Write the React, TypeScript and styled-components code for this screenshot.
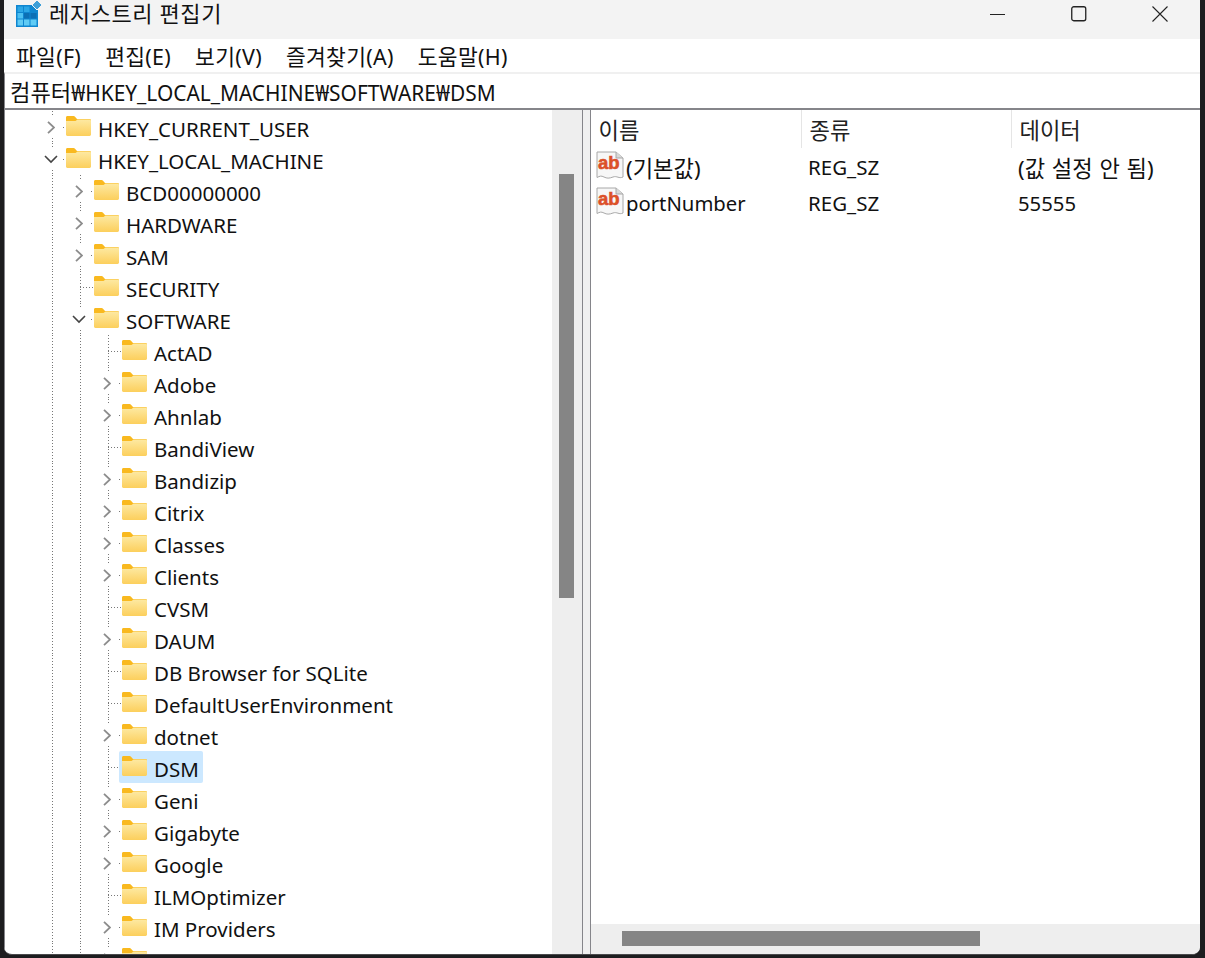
import styled, { createGlobalStyle } from "styled-components";

const FONT = `"Noto Sans", "Noto Sans CJK KR", sans-serif`;

type TreeItem = {
  label: string;
  level: number;
  state?: "open" | "closed";
  selected?: boolean;
};

const TREE: TreeItem[] = [
  { label: "HKEY_CURRENT_USER", level: 0, state: "closed" },
  { label: "HKEY_LOCAL_MACHINE", level: 0, state: "open" },
  { label: "BCD00000000", level: 1, state: "closed" },
  { label: "HARDWARE", level: 1, state: "closed" },
  { label: "SAM", level: 1, state: "closed" },
  { label: "SECURITY", level: 1 },
  { label: "SOFTWARE", level: 1, state: "open" },
  { label: "ActAD", level: 2 },
  { label: "Adobe", level: 2, state: "closed" },
  { label: "Ahnlab", level: 2, state: "closed" },
  { label: "BandiView", level: 2 },
  { label: "Bandizip", level: 2, state: "closed" },
  { label: "Citrix", level: 2, state: "closed" },
  { label: "Classes", level: 2, state: "closed" },
  { label: "Clients", level: 2, state: "closed" },
  { label: "CVSM", level: 2 },
  { label: "DAUM", level: 2, state: "closed" },
  { label: "DB Browser for SQLite", level: 2 },
  { label: "DefaultUserEnvironment", level: 2 },
  { label: "dotnet", level: 2, state: "closed" },
  { label: "DSM", level: 2, selected: true },
  { label: "Geni", level: 2, state: "closed" },
  { label: "Gigabyte", level: 2, state: "closed" },
  { label: "Google", level: 2, state: "closed" },
  { label: "ILMOptimizer", level: 2 },
  { label: "IM Providers", level: 2, state: "closed" },
  { label: "Logi", level: 2, state: "closed" },
];

const MENUS = ["파일(F)", "편집(E)", "보기(V)", "즐겨찾기(A)", "도움말(H)"];

const VALUES = [
  { name: "(기본값)", type: "REG_SZ", data: "(값 설정 안 됨)", hangul: true },
  { name: "portNumber", type: "REG_SZ", data: "55555", hangul: false },
];

const RegistryIcon = () => (
  <svg width="26" height="27" viewBox="0 0 26 27">
    <rect x="0" y="5" width="22" height="22" fill="#0f86d0" />
    <g fill="#2ba6e6">
      <rect x="1.500" y="6.500" width="5.500" height="5.500" />
      <rect x="8" y="6.500" width="5.500" height="5.500" />
      <rect x="1.500" y="13" width="5.500" height="5.500" fill="#4cc0f2" />
      <rect x="8" y="13" width="5.500" height="5.500" fill="#0c6fb5" />
      <rect x="14.500" y="13" width="6" height="5.500" fill="#0c6fb5" />
      <rect x="1.500" y="19.500" width="5.500" height="6" fill="#5fcbf5" />
      <rect x="8" y="19.500" width="5.500" height="6" fill="#5fcbf5" />
      <rect x="14.500" y="19.500" width="6" height="6" fill="#5fcbf5" />
    </g>
    <path d="M21 0l5 5-5 5-5-5z" fill="#3d9fd8" stroke="#f3f3f3" strokeWidth="1" />
  </svg>
);

const FolderIcon = () => (
  <svg width="25" height="20" viewBox="0 0 25 20">
    <defs>
      <linearGradient id="folderBody" x1="0" y1="0" x2="0" y2="1">
        <stop offset="0" stopColor="#fde9a2" />
        <stop offset="1" stopColor="#fccf5c" />
      </linearGradient>
    </defs>
    <path d="M0 1.500C0 .7.6 0 1.400 0h6.200c.5 0 .9.2 1.200.5L11 3h12.600c.8 0 1.400.6 1.400 1.400V8H0z" fill="#f9b91f" />
    <path d="M0 5h9.500L11.500 3.600h12.100c.8 0 1.400.6 1.400 1.400v13.600c0 .8-.6 1.400-1.400 1.400H1.400C.6 20 0 19.400 0 18.600z" fill="url(#folderBody)" />
  </svg>
);

const StringIcon = () => (
  <svg width="29" height="29" viewBox="0 0 29 29">
    <path
      d="M1 1h19l7 6v19c-4 2-6-1.500-10 0s-6 1.500-9 0-4-1-7 .5z"
      fill="#f7f7f7"
      stroke="#a8a8a8"
      strokeWidth="1"
    />
    <path d="M20 1v6h7" fill="#d8d8d8" stroke="#a8a8a8" strokeWidth="1" />
    <text
      x="2"
      y="18"
      fontFamily="Liberation Sans, sans-serif"
      fontWeight="700"
      fontSize="18.5"
      fill="#dc5028"
      stroke="#dc5028"
      strokeWidth=".6"
    >
      ab
    </text>
  </svg>
);

const Chevron = ({ open }: { open: boolean }) =>
  open ? (
    <svg width="14" height="9" viewBox="0 0 14 9">
      <path d="M1 1l6 6 6-6" fill="none" stroke="#444444" strokeWidth="1.600" />
    </svg>
  ) : (
    <svg width="8" height="13" viewBox="0 0 8 13">
      <path d="M1 .8l6 5.700-6 5.700" fill="none" stroke="#8c8c8c" strokeWidth="1.800" />
    </svg>
  );

const App = () => (
  <Desktop>
    <GlobalStyle />
    <Window>
      <TitleBar>
        <TitleIconSlot>
          <RegistryIcon />
        </TitleIconSlot>
        <TitleText>레지스트리 편집기</TitleText>
        <WindowControls>
          <ControlButton>
            <svg width="16" height="16" viewBox="0 0 16 16">
              <path d="M0 8.500h15" stroke="#222" strokeWidth="1" />
            </svg>
          </ControlButton>
          <ControlButton>
            <svg width="16" height="16" viewBox="0 0 16 16">
              <rect x=".75" y=".75" width="14" height="14" rx="2" fill="none" stroke="#222" strokeWidth="1.300" />
            </svg>
          </ControlButton>
          <ControlButton>
            <svg width="16" height="16" viewBox="0 0 16 16">
              <path d="M.5.500l15 15M15.500.500l-15 15" stroke="#222" strokeWidth="1.100" />
            </svg>
          </ControlButton>
        </WindowControls>
      </TitleBar>

      <MenuBar>
        {MENUS.map((m) => (
          <MenuItem key={m}>{m}</MenuItem>
        ))}
      </MenuBar>

      <AddressBar>
        <Hangul>컴퓨터</Hangul>₩HKEY_LOCAL_MACHINE₩SOFTWARE₩DSM
      </AddressBar>

      <Split>
        <TreePane>
          <TreeList>
            {TREE.map((item) => (
              <TreeRow key={item.label}>
                {Array.from({ length: item.level }).map((_, i) => (
                  <Guide key={i} />
                ))}
                <Connector $hasChevron={!!item.state}>
                  {item.state && <Chevron open={item.state === "open"} />}
                </Connector>
                <Label $selected={item.selected}>
                  <FolderSlot>
                    <FolderIcon />
                  </FolderSlot>
                  <LabelText>{item.label}</LabelText>
                </Label>
              </TreeRow>
            ))}
          </TreeList>
          <VScrollbar>
            <VThumb />
          </VScrollbar>
        </TreePane>

        <Splitter />

        <ListPane>
          <ListHeader>
            <HeaderCell $width={211}>이름</HeaderCell>
            <HeaderCell $width={210}>종류</HeaderCell>
            <HeaderCell $width={187} $last>
              데이터
            </HeaderCell>
          </ListHeader>
          <ListBody>
            {VALUES.map((v) => (
              <ValueRow key={v.name}>
                <NameCell>
                  <ValueIcon>
                    <StringIcon />
                  </ValueIcon>
                  <ValueText $hangul={v.hangul}>{v.name}</ValueText>
                </NameCell>
                <ValueCell>{v.type}</ValueCell>
                <ValueCell>
                  <ValueText $hangul={v.hangul}>{v.data}</ValueText>
                </ValueCell>
              </ValueRow>
            ))}
          </ListBody>
          <HScrollbar>
            <HThumb />
          </HScrollbar>
        </ListPane>
      </Split>
    </Window>
  </Desktop>
);

const GlobalStyle = createGlobalStyle`
  html, body {
    margin: 0;
    height: 958px;
    overflow: hidden;
    background: #1d1d1f;
  }
  * {
    box-sizing: border-box;
  }
`;

const Desktop = styled.div`
  height: 958px;
  padding: 0 5px 3px 4px;
  display: flex;
  font-family: ${FONT};
  color: #111;
`;

const Window = styled.div`
  flex: 1;
  min-width: 0;
  display: flex;
  flex-direction: column;
  background: #fff;
  border-radius: 0 0 8px 8px;
  overflow: hidden;
  border-bottom: 1px solid #4a4a4c;
`;

const TitleBar = styled.div`
  height: 39px;
  flex: none;
  display: flex;
  align-items: flex-start;
  background: #f3f3f3;
`;

const TitleIconSlot = styled.div`
  padding-left: 12px;
  width: 45px;
  flex: none;
`;

const TitleText = styled.div`
  font-size: 22px;
  line-height: 27px;
  letter-spacing: 0.6px;
  flex: 1;
`;

const WindowControls = styled.div`
  display: flex;
`;

const ControlButton = styled.div`
  width: 81px;
  height: 27px;
  display: flex;
  align-items: center;
  justify-content: center;
`;

const MenuBar = styled.div`
  height: 33px;
  flex: none;
  display: flex;
  align-items: center;
  padding-left: 12px;
  gap: 24px;
  background: #fff;
  font-size: 21.500px;
  letter-spacing: 0.3px;
`;

const MenuItem = styled.span`
  line-height: 36px;
  padding-top: 2px;
`;

const AddressBar = styled.div`
  height: 38px;
  flex: none;
  padding: 2px 0 0 5px;
  background: #fff;
  border-top: 2px solid #f0f0f0;
  border-bottom: 2px solid #85858a;
  border-left: 1px solid #85858a;
  font-size: 20.900px;
  line-height: 34px;
  white-space: nowrap;
`;

const Hangul = styled.span`
  font-size: 22.200px;
`;

const Split = styled.div`
  flex: 1;
  min-height: 0;
  display: flex;
  border-left: 1px solid #85858a;
`;

const TreePane = styled.div`
  width: 578px;
  flex: none;
  display: flex;
  border-right: 1px solid #85858a;
`;

const TreeList = styled.div`
  flex: 1;
  min-width: 0;
  overflow: hidden;
  padding: 1px 0 0 33px;
`;

const TreeRow = styled.div`
  height: 32px;
  display: flex;
`;

const DOTS = "repeating-linear-gradient(to bottom, #777 0 1px, transparent 1px 3px)";
const HDOTS = "repeating-linear-gradient(to right, #777 0 1px, transparent 1px 3px)";

const Guide = styled.div`
  width: 28px;
  flex: none;
  background: ${DOTS} 14px 0 / 1px 100% no-repeat;
`;

const Connector = styled.div<{ $hasChevron: boolean }>`
  width: 28px;
  flex: none;
  display: flex;
  align-items: center;
  justify-content: center;
  padding-right: 2px;
  background: ${(p) =>
    p.$hasChevron
      ? `${DOTS} 14px 0 / 1px 4px no-repeat, ${DOTS} 14px 27px / 1px 5px no-repeat, linear-gradient(#777, #777) 25px 16px / 1px 1px no-repeat`
      : `${DOTS} 14px 0 / 1px 100% no-repeat, ${HDOTS} 14px 16px / 14px 1px no-repeat`};
`;

const Label = styled.div<{ $selected?: boolean }>`
  display: flex;
  align-items: center;
  height: 32px;
  margin-left: -3px;
  padding: 0 4px 0 3px;
  border-radius: 2px;
  background: ${(p) => (p.$selected ? "#cce8ff" : "transparent")};
`;

const FolderSlot = styled.div`
  display: flex;
  width: 32px;
  flex: none;
  margin-top: -2px;
`;

const LabelText = styled.span`
  font-size: 20.500px;
  line-height: 32px;
  padding-top: 4px;
  white-space: nowrap;
`;

const VScrollbar = styled.div`
  width: 30px;
  flex: none;
  background: #eeeeee;
  padding: 64px 8px 0 7px;
`;

const VThumb = styled.div`
  height: 424px;
  background: #858585;
`;

const Splitter = styled.div`
  width: 7px;
  flex: none;
  background: #f0f0f0;
`;

const ListPane = styled.div`
  flex: 1;
  min-width: 0;
  display: flex;
  flex-direction: column;
  border-left: 1px solid #85858a;
`;

const ListHeader = styled.div`
  height: 38px;
  flex: none;
  display: flex;
`;

const HeaderCell = styled.div<{ $width: number; $last?: boolean }>`
  width: ${(p) => p.$width}px;
  flex: none;
  padding-left: 7.500px;
  font-size: 22.200px;
  line-height: 42px;
  color: #222;
  border-right: ${(p) => (p.$last ? "none" : "1px solid #e5e5e5")};
`;

const ListBody = styled.div`
  flex: 1;
  padding: 1px 0 0 5px;
`;

const ValueRow = styled.div`
  height: 36px;
  display: flex;
  align-items: center;
  font-size: 20.500px;
`;

const NameCell = styled.div`
  width: 212px;
  flex: none;
  display: flex;
  align-items: center;
  gap: 1px;
`;

const ValueIcon = styled.div`
  display: flex;
  margin-top: -3px;
`;

const ValueText = styled.span<{ $hangul?: boolean }>`
  font-size: ${(p) => (p.$hangul ? "22.200px" : "20.300px")};
  word-spacing: ${(p) => (p.$hangul ? "1px" : "0")};
`;

const ValueCell = styled.div`
  width: 210px;
  flex: none;
  white-space: nowrap;
`;

const HScrollbar = styled.div`
  height: 30px;
  flex: none;
  background: #eeeeee;
  padding: 7px 0 0 31px;
`;

const HThumb = styled.div`
  width: 358px;
  height: 15px;
  background: #858585;
`;

export default App;
